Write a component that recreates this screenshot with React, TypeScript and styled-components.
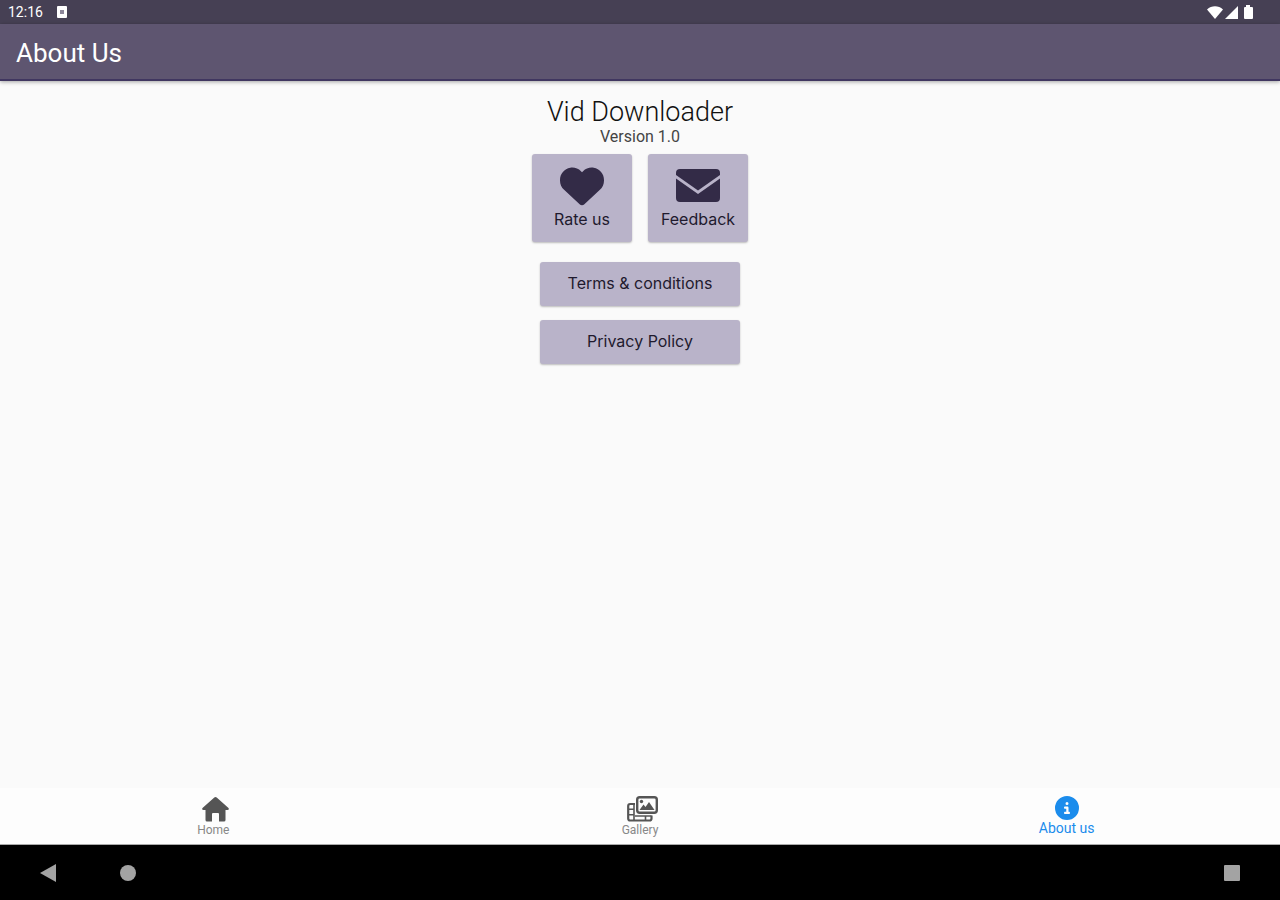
import React from "react";
import styled, { createGlobalStyle } from "styled-components";
import { FaHeart, FaCircleInfo } from "react-icons/fa6";

const GlobalStyle = createGlobalStyle`
  * { box-sizing: border-box; }
  body { margin: 0; background: #fafafa; font-family: Roboto, "Liberation Sans", sans-serif; }
  button { font: inherit; border: 0; margin: 0; padding: 0; cursor: pointer; }
  h1, h2, p { margin: 0; font-weight: 400; }
  svg { display: block; }
`;

const Screen = styled.div`
  min-height: 100vh;
  display: flex;
  flex-direction: column;
`;

const StatusBar = styled.div`
  height: 24px;
  padding: 0 24px 0 8px;
  display: flex;
  align-items: center;
  justify-content: space-between;
  background: #464054;
  color: #fff;
  font-size: 14px;
  line-height: 24px;
`;

const StatusGroup = styled.div<{ $gap: number }>`
  display: flex;
  align-items: center;
  gap: ${(p) => p.$gap}px;
`;

const AppBar = styled.header`
  height: 57px;
  padding: 2px 16px 0;
  display: flex;
  align-items: center;
  background: #5e5570;
  border-bottom: 2px solid #403660;
  box-shadow: 0 1px 4px rgba(0, 0, 0, 0.35);
`;

const AppBarTitle = styled.h1`
  color: #fff;
  font-size: 26px;
  line-height: 32px;
`;

const Content = styled.main`
  flex: 1;
  display: flex;
  flex-direction: column;
  align-items: center;
  padding-top: 15px;
`;

const AppName = styled.h2`
  color: #111;
  font-size: 27px;
  font-weight: 300;
  line-height: 32px;
`;

const Version = styled.p`
  color: #444;
  font-size: 16px;
  line-height: 18px;
`;

const Tiles = styled.div`
  display: flex;
  gap: 16px;
  margin: 8px 0 20px;
`;

const Card = styled.button`
  background: #b9b3c9;
  color: #1f1a2e;
  border-radius: 3px;
  box-shadow: 0 1px 2px rgba(0, 0, 0, 0.25);
  font-family: Inter, Roboto, sans-serif;
  font-size: 16px;
  line-height: 24px;
`;

const Tile = styled(Card)`
  width: 100px;
  height: 88px;
  padding-bottom: 2px;
  display: flex;
  flex-direction: column;
  align-items: center;
  justify-content: center;

  svg { color: #332b47; }
`;

const TileIcon = styled.span`
  height: 44px;
  padding-top: 1px;
  display: flex;
  align-items: center;
`;

const Links = styled.div`
  display: flex;
  flex-direction: column;
  gap: 14px;
`;

const LinkCard = styled(Card)`
  width: 200px;
  height: 44px;
  padding-bottom: 2px;
`;

const Tabs = styled.nav`
  height: 57px;
  display: flex;
  background: #fdfdfd;
  border-bottom: 1px solid #aaa;
`;

const Tab = styled.button<{ $active?: boolean }>`
  flex: 1;
  display: flex;
  flex-direction: column;
  align-items: center;
  justify-content: flex-start;
  padding-top: 8px;
  background: transparent;
  color: ${(p) => (p.$active ? "#1b8cec" : "#888")};
  font-size: ${(p) => (p.$active ? 14 : 12)}px;
  line-height: 16px;

  svg { color: ${(p) => (p.$active ? "#1b8cec" : "#555")}; }
`;

const IconBox = styled.span<{ $active?: boolean }>`
  height: ${(p) => (p.$active ? 24 : 26)}px;
  padding-left: ${(p) => (p.$active ? 0 : 5)}px;
  display: flex;
  align-items: center;
`;

const SystemBar = styled.div`
  height: 55px;
  padding: 0 40px;
  display: flex;
  align-items: center;
  justify-content: space-between;
  background: #000;
`;

const SystemGroup = styled.div`
  display: flex;
  align-items: center;
  gap: 64px;
`;

const SystemButton = styled.button`
  background: transparent;
`;

const EnvelopeIcon = () => (
  <svg width="44" height="33" viewBox="0 0 44 33" fill="currentColor" aria-hidden="true">
    <path d="M4 0H40Q44 0 44 4V6L22 21.500 0 6V4Q0 0 4 0z" />
    <path d="M0 9.500 22 25 44 9.500V29Q44 33 40 33H4Q0 33 0 29z" />
  </svg>
);

const HomeIcon = () => (
  <svg width="27" height="25" viewBox="0 0 27 25" fill="currentColor" aria-hidden="true">
    <path d="M12.300.6Q13.500-.4 14.700.6L26.500 11Q27.500 13 25.500 13H23.500V23Q23.500 24.500 22 24.500H17V17Q17 16 16 16H11Q10 16 10 17V24.500H5Q3.500 24.500 3.500 23V13H1.500Q-.5 13 .5 11z" />
  </svg>
);

const GalleryIcon = () => (
  <svg width="31" height="26" viewBox="0 0 31 26" fill="none" stroke="currentColor" aria-hidden="true">
    <rect x="10.200" y="1.200" width="19.600" height="15.600" rx="2.500" strokeWidth="2.400" />
    <path d="M12.500 14 16.500 8.500 18.500 11 22 6 27.500 14z" fill="currentColor" stroke="none" />
    <circle cx="14.500" cy="5.500" r="1.700" fill="currentColor" stroke="none" />
    <path d="M8 8H3.200Q1.200 8 1.200 10V22.500Q1.200 24.500 3.200 24.500H22.500Q24.500 24.500 24.500 22.500V19.500" strokeWidth="2.200" />
    <path d="M7 8V24M2 13.200H7M2 18.800H7M8 20H24.500M18.500 20V24" strokeWidth="1.600" />
  </svg>
);

export default function App() {
  return (
    <Screen>
      <GlobalStyle />
      <StatusBar>
        <StatusGroup $gap={14}>
          <span>12:16</span>
          <svg width="10" height="12" viewBox="0 0 10 12" aria-hidden="true">
            <rect width="10" height="12" rx="1" fill="#fff" />
            <rect x="3" y="4" width="4" height="4" fill="#8d879a" />
          </svg>
        </StatusGroup>
        <StatusGroup $gap={2}>
          <svg width="16" height="13" viewBox="0 0 16 13" aria-hidden="true">
            <path d="M0 3.500C4.500-.8 11.500-.8 16 3.500L8 13z" fill="#fff" />
          </svg>
          <svg width="13" height="13" viewBox="0 0 13 13" aria-hidden="true">
            <path d="M13 0v13H0z" fill="#fff" />
          </svg>
          <svg width="16" height="14" viewBox="0 0 16 14" aria-hidden="true">
            <path d="M6 0h4v2h2q1 0 1 1v10q0 1-1 1H5q-1 0-1-1V3q0-1 1-1h1z" fill="#fff" />
          </svg>
        </StatusGroup>
      </StatusBar>
      <AppBar>
        <AppBarTitle>About Us</AppBarTitle>
      </AppBar>
      <Content>
        <AppName>Vid Downloader</AppName>
        <Version>Version 1.0</Version>
        <Tiles>
          <Tile type="button">
            <TileIcon><FaHeart size={44} /></TileIcon>
            Rate us
          </Tile>
          <Tile type="button">
            <TileIcon><EnvelopeIcon /></TileIcon>
            Feedback
          </Tile>
        </Tiles>
        <Links>
          <LinkCard type="button">Terms &amp; conditions</LinkCard>
          <LinkCard type="button">Privacy Policy</LinkCard>
        </Links>
      </Content>
      <Tabs>
        <Tab type="button">
          <IconBox><HomeIcon /></IconBox>
          Home
        </Tab>
        <Tab type="button">
          <IconBox><GalleryIcon /></IconBox>
          Gallery
        </Tab>
        <Tab type="button" $active aria-current="page">
          <IconBox $active><FaCircleInfo size={24} /></IconBox>
          About us
        </Tab>
      </Tabs>
      <SystemBar>
        <SystemGroup>
          <SystemButton type="button" aria-label="Back">
            <svg width="16" height="18" viewBox="0 0 16 18"><path d="M0 9 16 0v18z" fill="#a3a3a3" /></svg>
          </SystemButton>
          <SystemButton type="button" aria-label="Home screen">
            <svg width="16" height="16" viewBox="0 0 16 16"><circle cx="8" cy="8" r="8" fill="#a3a3a3" /></svg>
          </SystemButton>
        </SystemGroup>
        <SystemButton type="button" aria-label="Recent apps">
          <svg width="16" height="16" viewBox="0 0 16 16"><rect width="16" height="16" rx="1" fill="#a3a3a3" /></svg>
        </SystemButton>
      </SystemBar>
    </Screen>
  );
}
